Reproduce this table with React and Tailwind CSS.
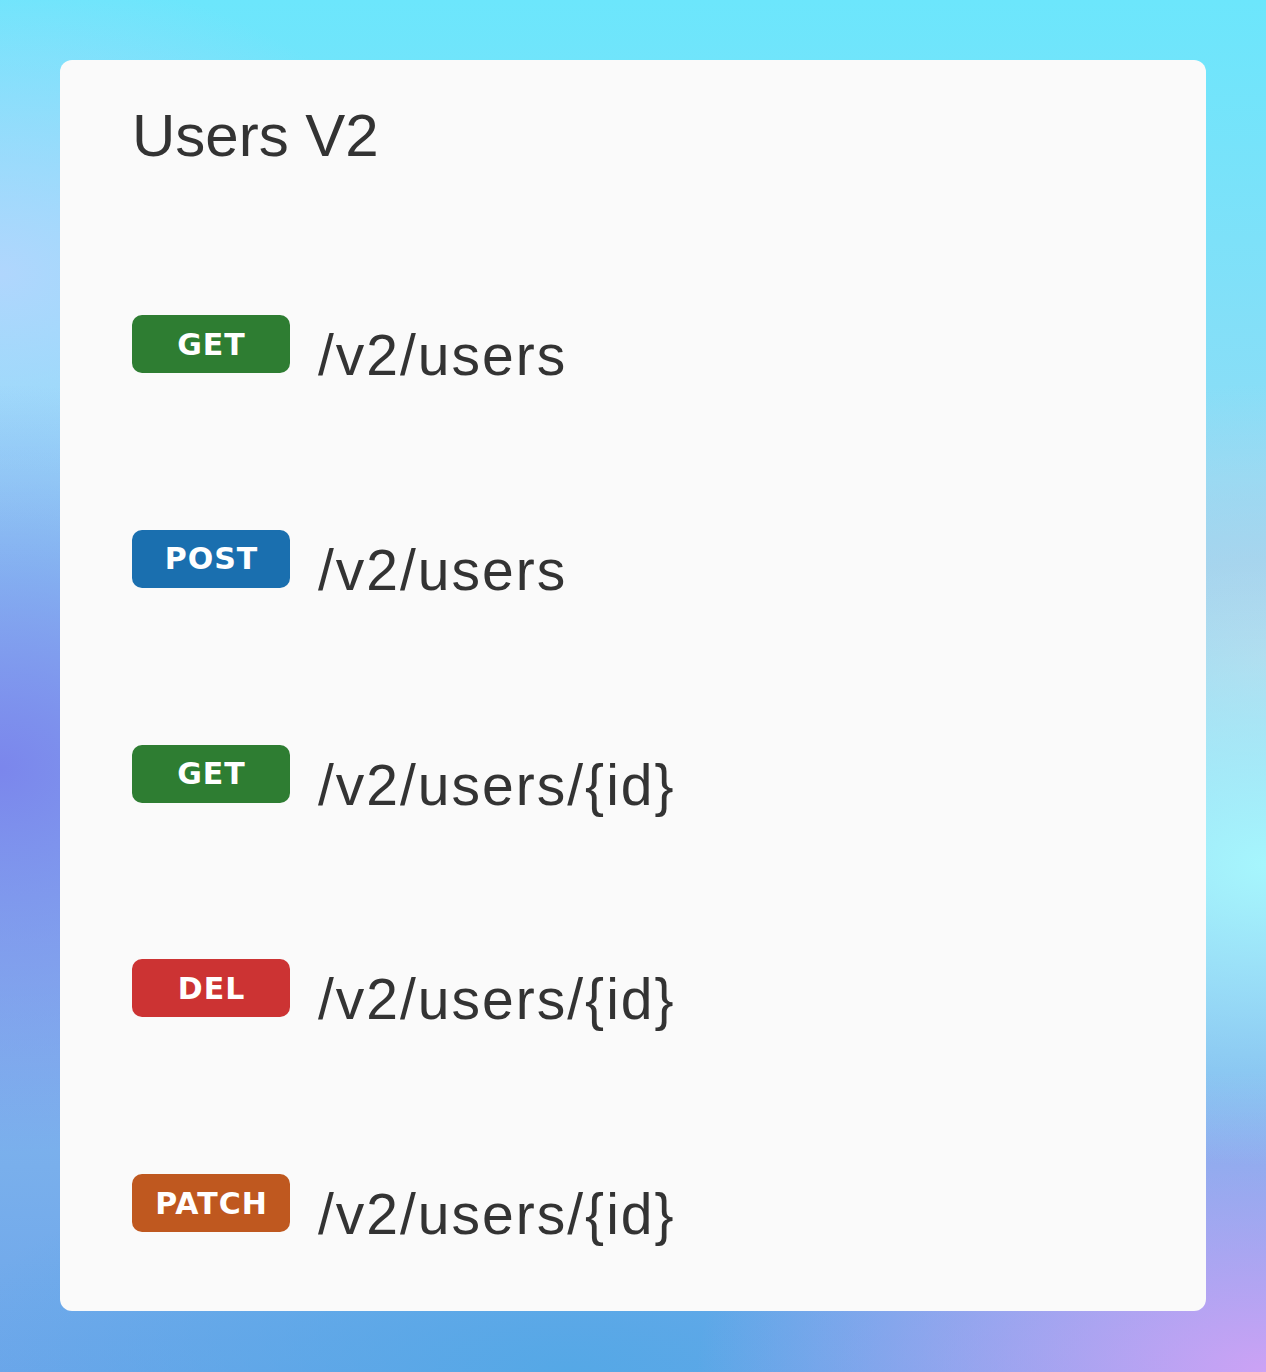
import React from "react";

const rows = [
  { m: "GET", c: "bg-[#2e7d32]", p: "/v2/users" },
  { m: "POST", c: "bg-[#1a6faf]", p: "/v2/users" },
  { m: "GET", c: "bg-[#2e7d32]", p: "/v2/users/{id}" },
  { m: "DEL", c: "bg-[#cc3333]", p: "/v2/users/{id}" },
  { m: "PATCH", c: "bg-[#bf581f]", p: "/v2/users/{id}" },
];

export default function App() {
  return (
    <div className="min-h-[1372px] w-full p-[60px] bg-[radial-gradient(ellipse_40%_28%_at_0%_56%,#7b86ec,transparent),radial-gradient(ellipse_35%_22%_at_100%_63%,#a6f6fd,transparent),radial-gradient(ellipse_45%_22%_at_100%_100%,#cca2f5,transparent),radial-gradient(ellipse_50%_18%_at_45%_100%,#55a8e6,transparent),radial-gradient(ellipse_35%_22%_at_0%_20%,#b0d6fd,transparent),radial-gradient(ellipse_30%_20%_at_100%_48%,#b5d4ea,transparent),linear-gradient(180deg,#6ce6fc_0%,#8edcf6_35%,#86b8ee_70%,#6ca6ea_100%)]">
      <div
        className="bg-[#fafafa] rounded-[12px] pt-[41px] pb-[65px] pl-[72px]"
        style={{ fontFamily: '"Liberation Sans", Arial, sans-serif' }}
      >
        <h1 className="text-[60px] leading-[69px] text-[#333333] font-normal">Users V2</h1>
        <div className="mt-[145px] flex flex-col gap-[142.75px]">
          {rows.map((r, i) => (
            <div key={i} className="flex items-start gap-[28px]">
              <div
                className={`${r.c} w-[158px] h-[58px] rounded-[10px] flex items-center justify-center text-white font-bold text-[30px] tracking-[1px] pl-[1px]`}
                style={{ fontFamily: '"DejaVu Sans", Verdana, sans-serif' }}
              >
                {r.m}
              </div>
              <div className="mt-[8px] text-[57px] leading-[64px] tracking-[2px] text-[#333333]">
                {r.p}
              </div>
            </div>
          ))}
        </div>
      </div>
    </div>
  );
}
